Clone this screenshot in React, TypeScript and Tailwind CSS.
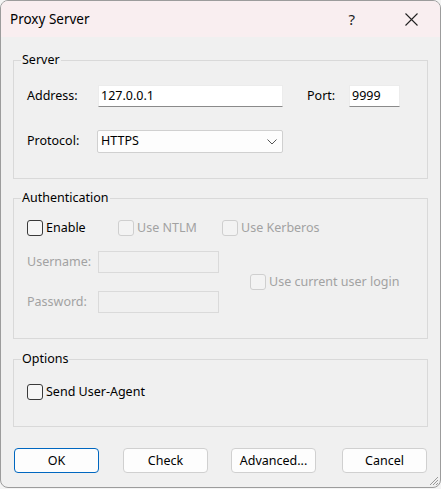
import { FC, ReactNode } from 'react';

const font = { fontFamily: '"Noto Sans", "Open Sans", sans-serif' };

interface CheckProps {
  label: string;
  disabled?: boolean;
}

const Check: FC<CheckProps> = ({ label, disabled }) => (
  <div className="flex h-4 items-center">
    <span
      className={`h-4 w-4 shrink-0 rounded-[3px] border ${
        disabled ? 'border-[#cfcfcf] bg-[#f3f3f3]' : 'border-[#3a3a3a] bg-[#f6f6f6]'
      }`}
    />
    <span className={`ml-[3px] whitespace-nowrap ${disabled ? 'text-[#a2a2a2]' : 'text-black'}`}>
      {label}
    </span>
  </div>
);

const Group: FC<{ title: string; className: string; children: ReactNode }> = ({
  title,
  className,
  children,
}) => (
  <fieldset className={`m-0 border border-[#d9d9d9] p-0 ${className}`}>
    <legend className="ml-[7px] px-[1px] leading-[16px] text-black">{title}</legend>
    {children}
  </fieldset>
);

const Button: FC<{ label: string; primary?: boolean; className?: string }> = ({
  label,
  primary,
  className = '',
}) => (
  <button
    className={`h-[25px] w-[85px] rounded-[4px] border bg-[#fdfdfd] pt-[1px] text-black ${
      primary ? 'border-[#0067c0]' : 'border-[#d0d0d0]'
    } ${className}`}
  >
    {label}
  </button>
);

export default function App() {
  return (
    <div className="h-[489px] w-[441px] bg-[#f4f4f4]" style={font}>
      <div className="relative flex h-[488px] w-[441px] flex-col overflow-hidden rounded-[8px] border border-[#9c9c9c] bg-[#f0f0f0] text-[12.5px]">
        {/* title bar */}
        <div className="flex h-[36px] shrink-0 items-center bg-[#f9eef0] pl-[9px]">
          <span className="text-[13.5px] text-black">Proxy Server</span>
          <span className="ml-auto mr-[50px] text-[15px] text-[#222]">?</span>
          <svg width="13" height="13" viewBox="0 0 13 13" className="mr-[22px]">
            <path d="M0.5 0.5L12.5 12.5M12.5 0.5L0.5 12.5" stroke="#222" strokeWidth="1.1" />
          </svg>
        </div>

        <div className="flex flex-col px-[12px] pt-[15px]">
          <Group title="Server" className="h-[127px]">
            <div className="flex flex-col pl-[13px] pt-[17px]">
              <div className="flex h-[22px] items-center">
                <span className="w-[71px]">Address:</span>
                <div className="flex h-[22px] w-[185px] items-center border border-[#ececec] border-b-[#8a8a8a] bg-white pl-[2px]">
                  127.0.0.1
                </div>
                <span className="ml-[24px] w-[42px]">Port:</span>
                <div className="flex h-[22px] w-[51px] items-center border border-[#ececec] border-b-[#8a8a8a] bg-white pl-[2px]">
                  9999
                </div>
              </div>
              <div className="mt-[23px] flex h-[23px] items-center">
                <span className="w-[70px]">Protocol:</span>
                <div className="flex h-[23px] w-[186px] items-center rounded-[2px] border border-[#d0d0d0] bg-[#fdfdfd] pl-[3px] pr-[5px]">
                  HTTPS
                  <svg width="10" height="6" viewBox="0 0 10 6" className="ml-auto">
                    <path d="M0.5 0.5L5 5L9.5 0.5" fill="none" stroke="#555" strokeWidth="1" />
                  </svg>
                </div>
              </div>
            </div>
          </Group>

          <Group title="Authentication" className="mt-[11px] h-[149px]">
            <div className="flex flex-col pl-[13px] pt-[14px]">
              <div className="flex">
                <div className="w-[91px]">
                  <Check label="Enable" />
                </div>
                <div className="w-[104px]">
                  <Check label="Use NTLM" disabled />
                </div>
                <Check label="Use Kerberos" disabled />
              </div>
              <div className="mt-[15px] flex items-center">
                <div className="flex flex-col gap-[18px]">
                  <div className="flex h-[22px] items-center">
                    <span className="w-[71px] text-[#a2a2a2]">Username:</span>
                    <div className="h-[22px] w-[121px] border border-[#dadada] bg-[#f0f0f0]" />
                  </div>
                  <div className="flex h-[22px] items-center">
                    <span className="w-[71px] text-[#a2a2a2]">Password:</span>
                    <div className="h-[22px] w-[121px] border border-[#dadada] bg-[#f0f0f0]" />
                  </div>
                </div>
                <div className="ml-[31px]">
                  <Check label="Use current user login" disabled />
                </div>
              </div>
            </div>
          </Group>

          <Group title="Options" className="mt-[12px] h-[76px]">
            <div className="pl-[13px] pt-[17px]">
              <Check label="Send User-Agent" />
            </div>
          </Group>

          <div className="mt-[21px] flex pl-[1px]">
            <Button label="OK" primary />
            <Button label="Check" className="ml-[24px]" />
            <Button label="Advanced..." className="ml-[23px]" />
            <Button label="Cancel" className="ml-[26px]" />
          </div>
        </div>

        {/* size grip */}
        <svg width="11" height="11" viewBox="0 0 11 11" className="absolute bottom-[1px] right-[1px]">
          <path d="M10 2L2 10M10 5L5 10M10 8L8 10" stroke="#9a9a9a" strokeWidth="1" />
        </svg>
      </div>
    </div>
  );
}
